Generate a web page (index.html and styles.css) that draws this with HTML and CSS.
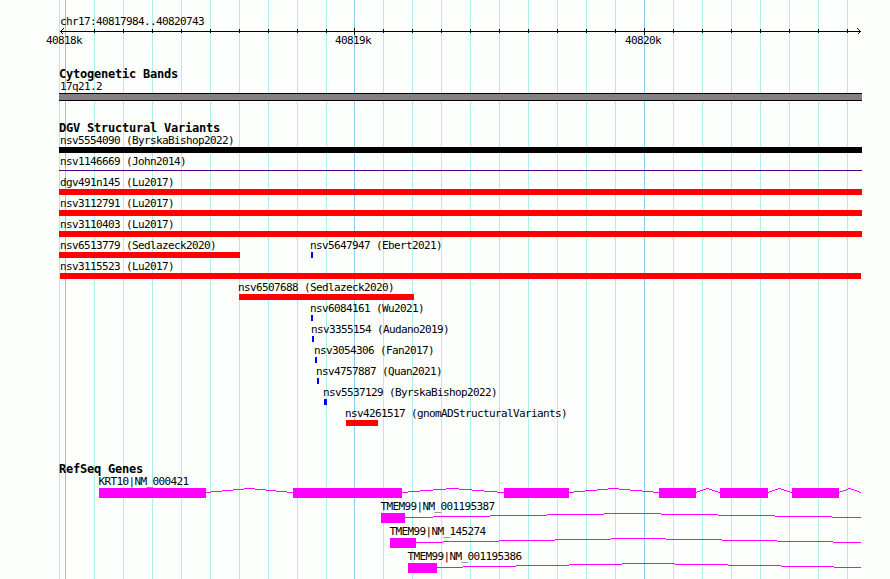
FILE: index.html
```
<!DOCTYPE html>
<html lang="en">
<head>
<meta charset="utf-8">
<title>chr17:40817984..40820743</title>
<link rel="stylesheet" href="styles.css">
</head>
<body>
<main class="browser">
  <svg class="gridlines" width="890" height="579" aria-hidden="true">
    <path class="minor" d="M59.5 0V579M94.5 0V579M123.5 0V579M152.5 0V579M181.5 0V579M210.5 0V579M239.5 0V579M268.5 0V579M297.5 0V579M326.5 0V579M383.5 0V579M412.5 0V579M441.5 0V579M470.5 0V579M499.5 0V579M528.5 0V579M557.5 0V579M586.5 0V579M615.5 0V579M673.5 0V579M702.5 0V579M731.5 0V579M760.5 0V579M789.5 0V579M818.5 0V579M847.5 0V579"/>
    <path class="major" d="M65.5 0V579M354.5 0V579M644.5 0V579"/>
  </svg>

  <header class="ruler">
    <div class="label region">chr17:40817984..40820743</div>
    <svg class="axis" width="890" height="6" aria-hidden="true">
      <path d="M61 3.5H861M94.5 1V5M123.5 1V5M152.5 1V5M181.5 1V5M210.5 1V5M239.5 1V5M268.5 1V5M297.5 1V5M326.5 1V5M354.5 0V7M383.5 1V5M412.5 1V5M441.5 1V5M470.5 1V5M499.5 1V5M528.5 1V5M557.5 1V5M586.5 1V5M615.5 1V5M644.5 0V7M673.5 1V5M702.5 1V5M731.5 1V5M760.5 1V5M789.5 1V5M818.5 1V5M847.5 1V5"/>
      <path d="M63.5 .5L60.5 3.5L63.5 6.5M857.5 .5L860.5 3.5L857.5 6.5"/>
    </svg>
    <div class="row ticks">
      <span class="feature label" style="--x:46px">40818k</span>
      <span class="feature label" style="--x:335px">40819k</span>
      <span class="feature label" style="--x:625px">40820k</span>
    </div>
  </header>

  <section class="track bands">
    <h2>Cytogenetic Bands</h2>
    <div class="feature" style="--x:60px"><div class="label">17q21.2</div></div>
    <div class="band"></div>
  </section>

  <section class="track variants">
    <h2>DGV Structural Variants</h2>
    <div class="row"><div class="feature" style="--x:59px;--w:803px;--shift:1px"><div class="label">nsv5554090 (ByrskaBishop2022)</div><div class="bar complex"></div></div></div>
    <div class="row"><div class="feature" style="--x:59px;--w:803px;--shift:1px"><div class="label">nsv1146669 (John2014)</div><div class="bar inversion"></div></div></div>
    <div class="row"><div class="feature" style="--x:59px;--w:803px;--shift:1px"><div class="label">dgv491n145 (Lu2017)</div><div class="bar loss"></div></div></div>
    <div class="row"><div class="feature" style="--x:59px;--w:803px;--shift:1px"><div class="label">nsv3112791 (Lu2017)</div><div class="bar loss"></div></div></div>
    <div class="row"><div class="feature" style="--x:59px;--w:803px;--shift:1px"><div class="label">nsv3110403 (Lu2017)</div><div class="bar loss"></div></div></div>
    <div class="row">
      <div class="feature" style="--x:59px;--w:181px;--shift:1px"><div class="label">nsv6513779 (Sedlazeck2020)</div><div class="bar loss"></div></div>
      <div class="feature" style="--x:311px;--w:2px"><div class="label">nsv5647947 (Ebert2021)</div><div class="bar gain"></div></div>
    </div>
    <div class="row"><div class="feature" style="--x:60px;--w:801px;--shift:0px"><div class="label">nsv3115523 (Lu2017)</div><div class="bar loss"></div></div></div>
    <div class="row"><div class="feature" style="--x:239px;--w:175px"><div class="label">nsv6507688 (Sedlazeck2020)</div><div class="bar loss"></div></div></div>
    <div class="row"><div class="feature" style="--x:311px;--w:2px"><div class="label">nsv6084161 (Wu2021)</div><div class="bar gain"></div></div></div>
    <div class="row"><div class="feature" style="--x:312px;--w:2px"><div class="label">nsv3355154 (Audano2019)</div><div class="bar gain"></div></div></div>
    <div class="row"><div class="feature" style="--x:315px;--w:2px"><div class="label">nsv3054306 (Fan2017)</div><div class="bar gain"></div></div></div>
    <div class="row"><div class="feature" style="--x:317px;--w:2px"><div class="label">nsv4757887 (Quan2021)</div><div class="bar gain"></div></div></div>
    <div class="row"><div class="feature" style="--x:324px;--w:3px"><div class="label">nsv5537129 (ByrskaBishop2022)</div><div class="bar gain"></div></div></div>
    <div class="row"><div class="feature" style="--x:346px;--w:32px"><div class="label">nsv4261517 (gnomADStructuralVariants)</div><div class="bar loss"></div></div></div>
  </section>

  <section class="track genes">
    <h2>RefSeq Genes</h2>
    <div class="feature" style="--x:99px">
      <div class="label">KRT10|NM_000421</div>
      <svg class="gene" width="763" height="10" viewBox="99 0 763 10" aria-hidden="true">
        <path class="intron" d="M206 4.5H211M211 3.5H222M222 2.5H233M233 1.5H244M244 .5H255M255 1.5H266M266 2.5H276M276 3.5H287M287 4.5H293"/>
        <path class="intron" d="M402 4.5H408M408 3.5H420M420 2.5H433M433 1.5H446M446 .5H459M459 1.5H472M472 2.5H484M484 3.5H497M497 4.5H504"/>
        <path class="intron" d="M569 4.5H574M574 3.5H585M585 2.5H597M597 1.5H608M608 .5H619M619 1.5H630M630 2.5H642M642 3.5H653M653 4.5H659"/>
        <path class="intron" d="M696 4.5H697M697 3.5H700M700 2.5H703M703 1.5H706M706 .5H709M709 1.5H712M712 2.5H715M715 3.5H718M718 4.5H720"/>
        <path class="intron" d="M768 4.5H769M769 3.5H772M772 2.5H775M775 1.5H778M778 .5H781M781 1.5H784M784 2.5H787M787 3.5H790M790 4.5H792"/>
        <path class="intron" d="M839 4.5H840M840 3.5H843M843 2.5H846M846 1.5H848M848 .5H851M851 1.5H854M854 2.5H857M857 3.5H859M859 4.5H861"/>
        <path class="exon" d="M99 0H206V10H99ZM293 0H402V10H293ZM504 0H569V10H504ZM659 0H696V10H659ZM720 0H768V10H720ZM792 0H839V10H792Z"/>
      </svg>
    </div>
    <div class="feature" style="--x:381px">
      <div class="label">TMEM99|NM_001195387</div>
      <svg class="gene" width="481" height="10" viewBox="381 0 481 10" aria-hidden="true">
        <path class="intron" d="M405 4.5H433M433 3.5H490M490 2.5H547M547 1.5H604M604 .5H661M661 1.5H718M718 2.5H775M775 3.5H832M832 4.5H861"/>
        <path class="exon" d="M381 0H405V10H381Z"/>
      </svg>
    </div>
    <div class="feature" style="--x:390px">
      <div class="label">TMEM99|NM_145274</div>
      <svg class="gene" width="472" height="10" viewBox="390 0 472 10" aria-hidden="true">
        <path class="intron" d="M416 4.5H443M443 3.5H499M499 2.5H555M555 1.5H611M611 .5H666M666 1.5H722M722 2.5H777M777 3.5H833M833 4.5H861"/>
        <path class="exon" d="M390 0H416V10H390Z"/>
      </svg>
    </div>
    <div class="feature" style="--x:408px">
      <div class="label">TMEM99|NM_001195386</div>
      <svg class="gene" width="454" height="10" viewBox="408 0 454 10" aria-hidden="true">
        <path class="intron" d="M437 4.5H463M463 3.5H516M516 2.5H569M569 1.5H622M622 .5H675M675 1.5H728M728 2.5H781M781 3.5H834M834 4.5H861"/>
        <path class="exon" d="M408 0H437V10H408Z"/>
      </svg>
    </div>
  </section>
</main>
</body>
</html>
```

FILE: styles.css
```
* { box-sizing: border-box; }

body {
  margin: 0;
  background: #fcfffc;
  color: #000;
  font: 11px/13px "DejaVu Sans Mono", "Liberation Mono", monospace;
}

.browser {
  position: relative;
  width: 890px;
  height: 579px;
  padding-top: 15px;
  overflow: hidden;
}

/* Coordinate lines run behind every track. */
.gridlines {
  position: absolute;
  inset: 0;
  z-index: -1;
}

svg {
  display: block;
  overflow: visible;
  fill: none;
  shape-rendering: crispEdges;
}

.minor { stroke: #afeeee; }
.major { stroke: #87ceeb; }
.axis { stroke: #000; }

.label {
  height: 13px;
  white-space: pre;
  letter-spacing: -0.6226px;
}

.region { margin-left: 60px; }

.track { margin-top: 20px; }

.track h2 {
  height: 13px;
  margin: 0 0 0 59px;
  font-size: 12px;
  line-height: 14px;
  font-weight: bold;
  letter-spacing: -0.2246px;
  white-space: pre;
}

.row { display: grid; }

.feature {
  grid-area: 1 / 1;
  margin-left: var(--x);
}

.band {
  width: 803px;
  height: 8px;
  margin-left: 59px;
  background: #848084;
  border: solid #000;
  border-width: 1px 0;
}

.variants .row { height: 21px; }
.variants .label { margin-left: var(--shift, -1px); }

.bar {
  width: var(--w);
  height: 6px;
}

.complex { background: #000; }
.loss { background: #f00; }
.gain { background: #00f; }

.inversion {
  height: 1px;
  margin-top: 2px;
  background: #4b0082;
}

.genes { margin-top: 34px; }
.genes .feature { height: 25px; }
.genes .label { margin-left: -0.5px; }

.intron { stroke: #f0f; }
.exon { fill: #f0f; }
```
